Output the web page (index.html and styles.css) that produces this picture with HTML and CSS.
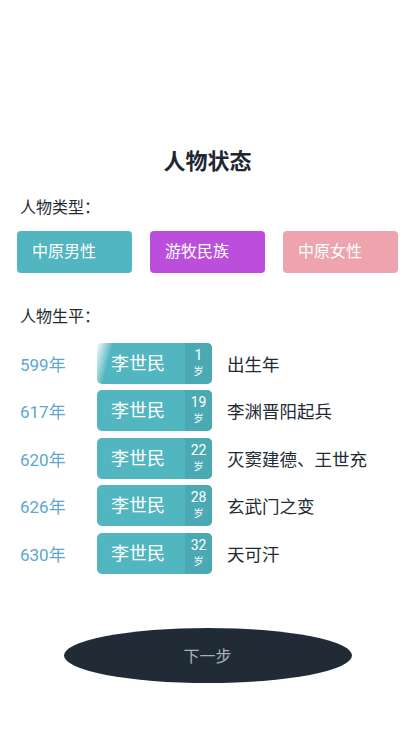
FILE: index.html
```html
<!DOCTYPE html>
<html lang="zh">
<head>
<meta charset="utf-8">
<title>人物状态</title>
<link rel="stylesheet" href="styles.css">
</head>
<body>
<div class="page">
  <h1 class="title">人物状态</h1>
  <div class="label">人物类型：</div>
  <div class="types">
    <div class="type type-male">中原男性</div>
    <div class="type type-nomad">游牧民族</div>
    <div class="type type-female">中原女性</div>
  </div>
  <div class="label label-life">人物生平：</div>
  <div class="rows">
    <div class="row">
      <div class="year">599年</div>
      <div class="card card-shine"><span class="name">李世民</span><span class="age"><span class="num">1</span><span class="sui">岁</span></span></div>
      <div class="event">出生年</div>
    </div>
    <div class="row">
      <div class="year">617年</div>
      <div class="card"><span class="name">李世民</span><span class="age"><span class="num">19</span><span class="sui">岁</span></span></div>
      <div class="event">李渊晋阳起兵</div>
    </div>
    <div class="row">
      <div class="year">620年</div>
      <div class="card"><span class="name">李世民</span><span class="age"><span class="num">22</span><span class="sui">岁</span></span></div>
      <div class="event">灭窦建德、王世充</div>
    </div>
    <div class="row">
      <div class="year">626年</div>
      <div class="card"><span class="name">李世民</span><span class="age"><span class="num">28</span><span class="sui">岁</span></span></div>
      <div class="event">玄武门之变</div>
    </div>
    <div class="row">
      <div class="year">630年</div>
      <div class="card"><span class="name">李世民</span><span class="age"><span class="num">32</span><span class="sui">岁</span></span></div>
      <div class="event">天可汗</div>
    </div>
  </div>
  <div class="actions">
    <div class="next">下一步</div>
  </div>
</div>
</body>
</html>
```

FILE: styles.css
```css
html, body {
  margin: 0;
  padding: 0;
  background: #ffffff;
}
body {
  font-family: Roboto, "Noto Sans CJK SC", sans-serif;
  color: #222a33;
}
.page {
  width: 415px;
  height: 739px;
  box-sizing: border-box;
  padding-top: 148px;
  overflow: hidden;
}
.title {
  margin: 0;
  text-align: center;
  font-size: 22px;
  line-height: 28px;
  font-weight: 700;
  color: #1e2833;
}
.label {
  margin: 20px 0 0 20px;
  font-size: 16px;
  line-height: 24px;
  color: #222a33;
}
.types {
  display: flex;
  gap: 18px;
  padding-left: 17px;
  margin-top: 11px;
}
.type {
  width: 115px;
  height: 42px;
  box-sizing: border-box;
  padding-left: 15px;
  border-radius: 4px;
  color: #ffffff;
  font-size: 16px;
  line-height: 42px;
}
.type-male { background: #51b6c0; }
.type-nomad { background: #bb4fdb; }
.type-female { background: #eda4ae; }
.label-life {
  margin-top: 32px;
}
.rows {
  display: flex;
  flex-direction: column;
  gap: 5.5px;
  margin-top: 13px;
}
.row {
  display: flex;
  align-items: center;
  height: 42px;
}
.year {
  width: 77px;
  padding-left: 20px;
  font-size: 17px;
  color: #5ba7d2;
}
.card {
  display: flex;
  width: 115px;
  height: 41px;
  border-radius: 5px;
  overflow: hidden;
  background: #51b6c0;
  color: #ffffff;
}
.card-shine {
  background: linear-gradient(105deg, rgba(255,255,255,0.95) 0px, rgba(255,255,255,0) 16px), #51b6c0;
}
.name {
  width: 88px;
  box-sizing: border-box;
  padding-left: 14px;
  font-size: 18px;
  line-height: 41px;
}
.age {
  width: 27px;
  display: flex;
  flex-direction: column;
  align-items: center;
  background: #4aa9b3;
  padding-top: 4px;
  box-sizing: border-box;
}
.num {
  font-size: 14px;
  line-height: 17px;
}
.sui {
  font-size: 10px;
  line-height: 15px;
}
.event {
  margin-left: 15px;
  font-size: 17.5px;
  color: #222a33;
}
.actions {
  display: flex;
  justify-content: center;
  margin-top: 54px;
}
.next {
  width: 288px;
  height: 55px;
  border-radius: 50%;
  background: #212b36;
  color: #a9b0b8;
  font-size: 16px;
  line-height: 58px;
  text-align: center;
}
```
